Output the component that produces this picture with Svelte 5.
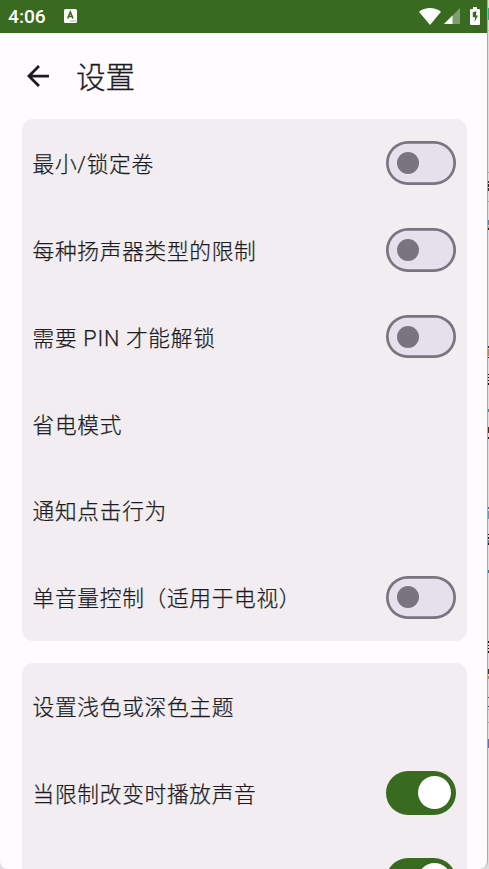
<script lang="ts">
	interface Setting {
		label: string;
		checked?: boolean;
	}

	let groups = $state<Setting[][]>([
		[
			{ label: '最小/锁定卷', checked: false },
			{ label: '每种扬声器类型的限制', checked: false },
			{ label: '需要 PIN 才能解锁', checked: false },
			{ label: '省电模式' },
			{ label: '通知点击行为' },
			{ label: '单音量控制（适用于电视）', checked: false }
		],
		[
			{ label: '设置浅色或深色主题' },
			{ label: '当限制改变时播放声音', checked: true },
			{ label: '', checked: true }
		]
	]);

	// slivers of the window behind the phone: top, height, color
	const slivers: [number, number, string][] = [
		[8, 12, '#1fae94'],
		[30, 1, '#b5b5b5'],
		[172, 1, '#a8a8a8'],
		[181, 2, '#333'],
		[184, 3, '#222'],
		[188, 3, '#333'],
		[201, 1, '#a8a8a8'],
		[220, 5, '#4d83b5'],
		[226, 2, '#d8a55f'],
		[228, 2, '#222'],
		[346, 2, '#333'],
		[349, 7, '#c08a3c'],
		[357, 1, '#222'],
		[374, 1, '#111'],
		[377, 1, '#111'],
		[380, 1, '#111'],
		[383, 2, '#111'],
		[409, 3, '#3a86b5'],
		[427, 6, '#5c2418'],
		[437, 2, '#222'],
		[507, 2, '#2d7ca8'],
		[511, 8, '#5a9fc4'],
		[534, 1, '#111'],
		[537, 2, '#223'],
		[540, 3, '#5c7fa8'],
		[543, 2, '#222'],
		[570, 3, '#2d7ca8'],
		[641, 2, '#111'],
		[645, 1, '#111'],
		[648, 1, '#111'],
		[651, 2, '#111'],
		[669, 5, '#4a3520'],
		[676, 3, '#b08a50'],
		[697, 1, '#1f6b8f'],
		[706, 1, '#1f4b7f'],
		[709, 1, '#a8a8a8'],
		[722, 1, '#a8a8a8'],
		[739, 9, '#5c70c0']
	];
</script>

<div class="desktop">
	<div class="phone">
		<div class="status-bar">
			<span class="clock">4:06</span>
			<svg class="notification" width="13" height="14" viewBox="0 0 13 14">
				<rect width="13" height="14" rx="1.5" fill="#fff" />
				<path d="M3.6 9.5 6.3 3l2.7 6.5M4.5 7.5h3.6" fill="none" stroke="#386a20" stroke-width="1.6" />
				<path d="M6.5 12h1M8.5 12h1M10.5 12h1" stroke="#386a20" />
			</svg>
			<div class="system-icons">
				<svg width="22" height="17" viewBox="0 0 22 17">
					<path d="M0 3.8C6.3-1.2 15.7-1.2 22 3.8L11 17Z" fill="#fff" />
				</svg>
				<svg class="signal" width="16" height="16" viewBox="0 0 16 16">
					<path d="M0 16 16 0v16Z" fill="#fff" opacity=".35" />
					<path d="M0 16 8.5 7.5V16Z" fill="#fff" />
				</svg>
				<svg class="battery" width="10" height="18" viewBox="0 0 10 18">
					<path d="M3 0h4v2h2q1 0 1 1v14q0 1-1 1H1q-1 0-1-1V3q0-1 1-1h2Z" fill="#fff" />
					<path d="M6.4 4.2 2.8 5.2v5h2.4l-.8 5 3.6-6.8H6Z" fill="#386a20" />
				</svg>
			</div>
		</div>

		<header>
			<svg class="back" width="22" height="22" viewBox="4 4 16 16">
				<path d="M20 11H7.83l5.59-5.59L12 4l-8 8 8 8 1.41-1.41L7.83 13H20v-2z" fill="#1c1b1f" />
			</svg>
			<h1>设置</h1>
		</header>

		<main>
			{#each groups as group}
				<section class="card">
					{#each group as item}
						<div class="row">
							<span class="label">{item.label}</span>
							{#if item.checked !== undefined}
								<button
									class="switch"
									class:on={item.checked}
									role="switch"
									aria-checked={item.checked}
									aria-label={item.label}
									onclick={() => (item.checked = !item.checked)}
								>
									<span class="thumb"></span>
								</button>
							{/if}
						</div>
					{/each}
				</section>
			{/each}
		</main>
	</div>

	<svg class="behind" width="2" height="869" viewBox="0 0 2 869" shape-rendering="crispEdges">
		{#each slivers as [y, height, color]}
			<rect x="0" {y} width="2" {height} fill={color} />
		{/each}
	</svg>
</div>

<style>
	:global(body) {
		overflow: hidden;
	}

	.desktop {
		display: flex;
		height: 869px;
		overflow: hidden;
		background: #dedede;
		font-family: Roboto, 'Noto Sans CJK SC', sans-serif;
		color: #1c1b1f;
	}

	.phone {
		box-sizing: border-box;
		width: 487.6px;
		height: 869px;
		flex: none;
		overflow: hidden;
		border-right: 1px solid #a9a7aa;
		border-radius: 0 0 8px 8px;
		background: #fffbff;
	}

	.behind {
		flex: none;
	}

	.status-bar {
		display: flex;
		align-items: center;
		box-sizing: border-box;
		height: 32.6px;
		padding: 0 6.6px 0 8px;
		background: #386a20;
	}

	.clock {
		width: 56px;
		padding-top: 2px;
		color: #fff;
		font-size: 19.2px;
		font-weight: 500;
		line-height: 32px;
	}

	.system-icons {
		display: flex;
		align-items: center;
		margin-left: auto;
	}

	.signal {
		margin-left: 3px;
	}

	.battery {
		margin-left: 10px;
	}

	header {
		display: flex;
		align-items: center;
		height: 86.9px;
		padding-left: 27px;
	}

	h1 {
		margin: 0 0 0 27px;
		padding-top: 4px;
		font-size: 29.6px;
		font-weight: 300;
		line-height: 38px;
		-webkit-text-stroke: 0.3px #1c1b1f;
	}

	main {
		display: flex;
		flex-direction: column;
		gap: 21.75px;
		padding: 0 20px 0 22px;
	}

	.card {
		border-radius: 11px;
		background: #f1edf1;
	}

	.row {
		display: flex;
		align-items: center;
		justify-content: space-between;
		height: 86.9px;
		padding: 0 10.4px 0 10.6px;
	}

	.label {
		padding-top: 4px;
		font-size: 21.7px;
		font-weight: 300;
		letter-spacing: 0.7px;
		line-height: 32px;
		white-space: nowrap;
		-webkit-text-stroke: 0.25px #1c1b1f;
	}

	.switch {
		display: flex;
		align-items: center;
		box-sizing: border-box;
		width: 70.4px;
		height: 43.5px;
		padding: 0 10.7px;
		border: none;
		border-radius: 22px;
		background: #e6e0ec;
		box-shadow: inset 0 0 0 2.7px #79747e;
	}

	.thumb {
		width: 22px;
		height: 22px;
		border-radius: 50%;
		background: #79747e;
	}

	.switch.on {
		justify-content: flex-end;
		padding: 0 5.5px;
		background: #386a20;
		box-shadow: none;
	}

	.on .thumb {
		width: 33px;
		height: 33px;
		background: #fff;
	}
</style>
